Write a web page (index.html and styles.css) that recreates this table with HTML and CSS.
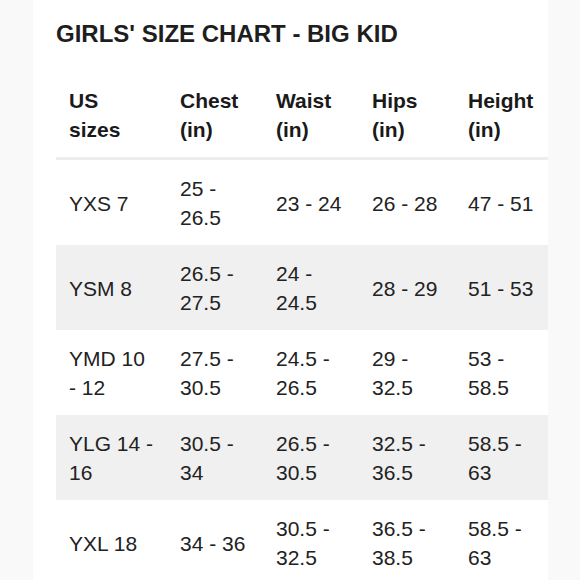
FILE: index.html
```
<!DOCTYPE html>
<html>
<head>
<meta charset="utf-8">
<link rel="stylesheet" href="styles.css">
</head>
<body>
<div class="sheet">
  <h1 class="title">GIRLS' SIZE CHART - BIG KID</h1>
  <table class="chart">
    <colgroup>
      <col class="c1"><col class="c2"><col class="c3"><col class="c4"><col class="c5">
    </colgroup>
    <thead>
      <tr><th>US sizes</th><th>Chest (in)</th><th>Waist (in)</th><th>Hips (in)</th><th>Height (in)</th></tr>
    </thead>
    <tbody>
      <tr><td>YXS 7</td><td>25 - 26.5</td><td>23 - 24</td><td>26 - 28</td><td>47 - 51</td></tr>
      <tr class="alt"><td>YSM 8</td><td>26.5 - 27.5</td><td>24 - 24.5</td><td>28 - 29</td><td>51 - 53</td></tr>
      <tr><td>YMD 10 - 12</td><td>27.5 - 30.5</td><td>24.5 - 26.5</td><td>29 - 32.5</td><td>53 - 58.5</td></tr>
      <tr class="alt"><td>YLG 14 - 16</td><td>30.5 - 34</td><td>26.5 - 30.5</td><td>32.5 - 36.5</td><td>58.5 - 63</td></tr>
      <tr><td>YXL 18</td><td>34 - 36</td><td>30.5 - 32.5</td><td>36.5 - 38.5</td><td>58.5 - 63</td></tr>
    </tbody>
  </table>
</div>
</body>
</html>
```
FILE: styles.css
```
html, body {
  margin: 0;
  padding: 0;
  background: #f9f9f9;
  font-family: "Liberation Sans", Arial, sans-serif;
}
.sheet {
  margin-left: 33px;
  width: 492px;
  min-height: 580px;
  background: #ffffff;
  padding: 20px 0 0 23px;
}
.title {
  margin: 0 0 24px 0;
  font-size: 24px;
  line-height: 28px;
  font-weight: bold;
  color: #1e1e1e;
}
.chart {
  width: 492px;
  table-layout: fixed;
  border-collapse: collapse;
  font-size: 21px;
  line-height: 29px;
  color: #222222;
}
.c1 { width: 111px; }
.c2 { width: 96px; }
.c3 { width: 96px; }
.c4 { width: 96px; }
.c5 { width: 93px; }
.chart th {
  text-align: left;
  font-weight: bold;
  color: #1a1a1a;
  padding: 14px 13px 13px 13px;
  vertical-align: top;
  border-bottom: 3px solid #ededed;
}
.chart td {
  padding: 14px 13px 13px 13px;
  vertical-align: middle;
}
.chart tr.alt td {
  background: #f0f0f0;
}
```
